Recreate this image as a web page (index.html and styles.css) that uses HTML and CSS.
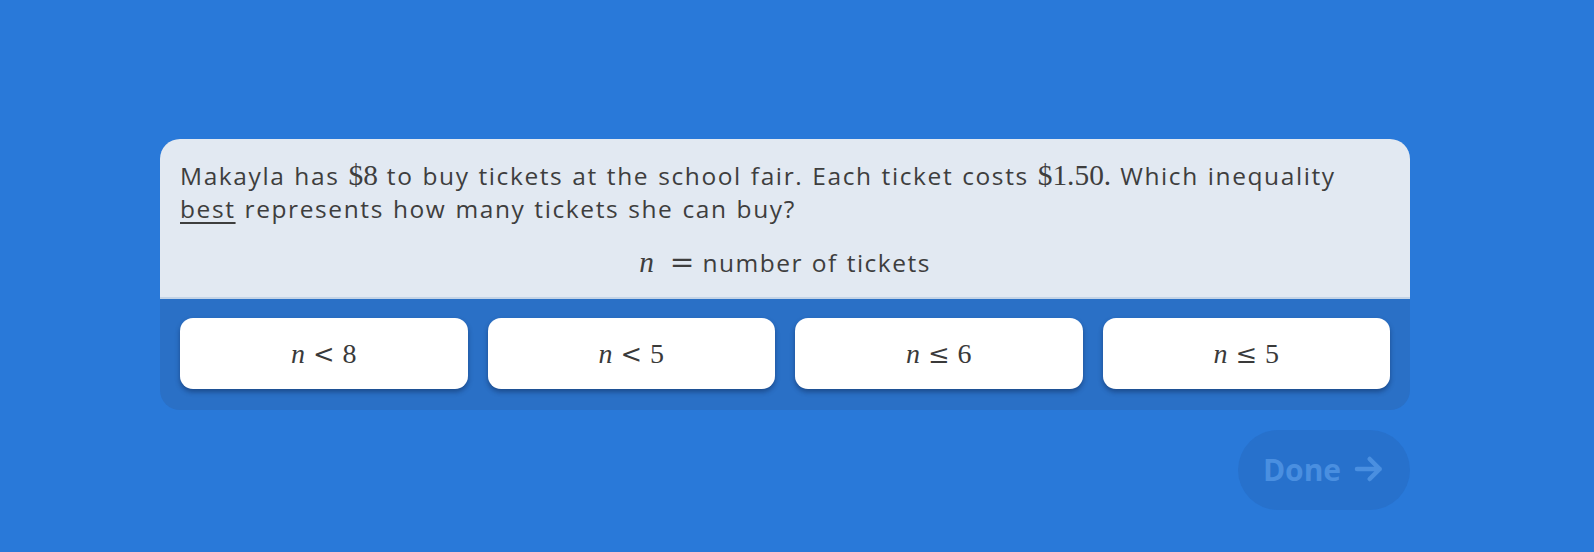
FILE: index.html
```html
<!DOCTYPE html>
<html lang="en">
<head>
<meta charset="utf-8">
<title>Question</title>
<link rel="stylesheet" href="styles.css">
</head>
<body>
<main class="page">
  <section class="card">
    <div class="prompt">
      <p class="question">Makayla has <span class="math">$8</span> to buy tickets at the school fair. Each ticket costs <span class="math">$1.50.</span> Which inequality<br><u>best</u> represents how many tickets she can buy?</p>
      <p class="definition"><span class="math"><i>n</i></span><span class="math eq">=</span>number of tickets</p>
    </div>
    <div class="choices">
      <button class="choice"><span class="math"><i>n</i><span class="rel">&lt;</span>8</span></button>
      <button class="choice"><span class="math"><i>n</i><span class="rel">&lt;</span>5</span></button>
      <button class="choice"><span class="math"><i>n</i><span class="rel">&le;</span>6</span></button>
      <button class="choice"><span class="math"><i>n</i><span class="rel">&le;</span>5</span></button>
    </div>
  </section>
  <div class="actions">
    <button class="done">Done
      <svg class="arrow" viewBox="0 0 24 24" width="32" height="32" aria-hidden="true"><path d="M3 12h17M12.5 4.5 20 12l-7.5 7.5" fill="none" stroke="currentColor" stroke-width="3.4" stroke-linecap="round" stroke-linejoin="round"/></svg>
    </button>
  </div>
</main>
</body>
</html>
```
FILE: styles.css
```css
html, body {
  margin: 0;
  padding: 0;
}
body {
  background: #2979d9;
  font-family: "Open Sans", "Noto Sans", sans-serif;
  color: #3e3e3e;
  height: 552px;
  overflow: hidden;
}
.page {
  width: 1250px;
  padding: 139px 0 0 160px;
}
.card {
  border-radius: 20px;
  overflow: hidden;
  background: #2a70c6;
}
.prompt {
  background: #e2e9f2;
  border-bottom: 2px solid #c3d3e6;
  padding: 20px 20px 17px;
  height: 121px;
}
.question {
  margin: 0;
  font-size: 24.5px;
  line-height: 33px;
  letter-spacing: 1.6px;
  word-spacing: 1px;
}
.question u {
  text-decoration-thickness: 2px;
  text-underline-offset: 4px;
}
.math {
  font-family: "Liberation Serif", "DejaVu Serif", serif;
  font-size: 1.2em;
  font-weight: 400;
  letter-spacing: 0;
  word-spacing: 0;
}
.math i {
  font-style: italic;
}
.definition {
  margin: 21px 0 0;
  text-align: center;
  font-size: 24.5px;
  line-height: 33px;
  letter-spacing: 1.5px;
  word-spacing: 1px;
}
.definition .eq {
  font-family: "DejaVu Serif", serif;
  font-size: 1.2em;
  margin: 0 8px 0 16px;
}
.choices {
  display: grid;
  grid-template-columns: repeat(4, 1fr);
  gap: 20px;
  padding: 19px 20px 21px;
}
.choice {
  height: 71px;
  border: none;
  border-radius: 13px;
  background: #ffffff;
  box-shadow: 0 3px 5px rgba(10, 30, 70, 0.45);
  color: #3a3a3a;
  cursor: pointer;
  padding: 0;
}
.choice .math {
  font-size: 28px;
}
.rel {
  font-family: "DejaVu Serif", serif;
  font-size: 0.92em;
  margin: 0 8px;
}
.actions {
  display: flex;
  justify-content: flex-end;
  margin-top: 20px;
}
.done {
  width: 172px;
  height: 80px;
  border: none;
  border-radius: 40px;
  background: #2771cc;
  color: #4a8fe0;
  font-family: "Open Sans", sans-serif;
  font-weight: 700;
  font-size: 30px;
  display: flex;
  align-items: center;
  justify-content: center;
  gap: 12px;
  padding: 0 0 2px;
}
.arrow {
  display: block;
}
```
